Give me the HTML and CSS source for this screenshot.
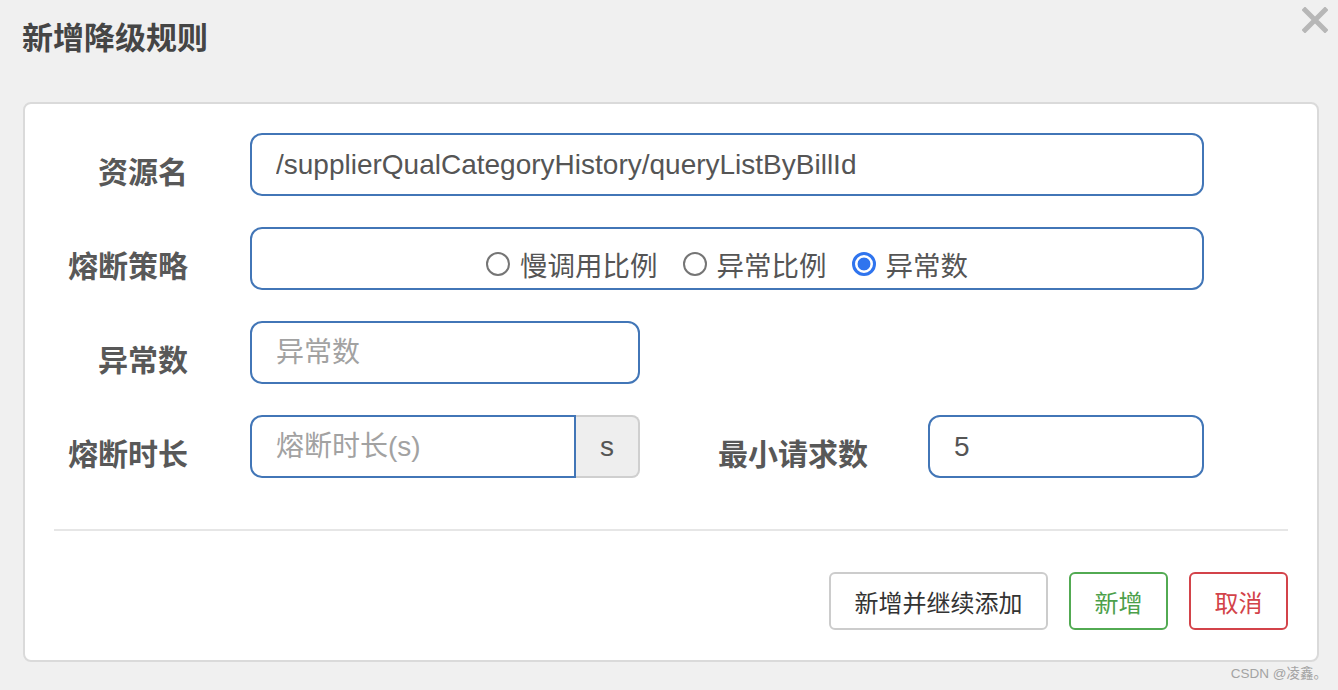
FILE: index.html
```html
<!DOCTYPE html>
<html lang="zh-CN">
<head>
<meta charset="utf-8">
<title>新增降级规则</title>
<link rel="stylesheet" href="styles.css">
</head>
<body>
<div class="page">
  <header class="header">
    <h1 class="title">新增降级规则</h1>
    <span class="close" aria-label="close">
      <svg width="26" height="26" viewBox="0 0 26 26"><path d="M3 3 L23 23 M23 3 L3 23" stroke="#b7b7b7" stroke-width="5" stroke-linecap="square"/></svg>
    </span>
  </header>

  <section class="card">
    <form class="form">
      <label class="label">资源名</label>
      <input class="field span-wide" type="text" value="/supplierQualCategoryHistory/queryListByBillId">

      <label class="label">熔断策略</label>
      <div class="field radio-box span-wide">
        <label class="radio-item"><input type="radio" name="strategy" class="radio"><span>慢调用比例</span></label>
        <label class="radio-item"><input type="radio" name="strategy" class="radio"><span>异常比例</span></label>
        <label class="radio-item"><input type="radio" name="strategy" class="radio" checked><span>异常数</span></label>
      </div>

      <label class="label">异常数</label>
      <input class="field" type="text" placeholder="异常数">
      <div class="empty"></div>
      <div class="empty"></div>

      <label class="label">熔断时长</label>
      <div class="input-group">
        <input class="field group-field" type="text" placeholder="熔断时长(s)">
        <span class="addon">s</span>
      </div>
      <label class="label label-right">最小请求数</label>
      <input class="field" type="text" value="5">
    </form>

    <div class="divider"></div>

    <div class="actions">
      <button class="btn btn-default" type="button">新增并继续添加</button>
      <button class="btn btn-green" type="button">新增</button>
      <button class="btn btn-red" type="button">取消</button>
    </div>
  </section>

  <div class="watermark">CSDN @凌鑫。</div>
</div>
</body>
</html>
```
FILE: styles.css
```css
* { box-sizing: border-box; }

html, body {
  margin: 0;
  padding: 0;
  background: #f0f0f0;
  font-family: "Liberation Sans", Arial, "Noto Sans CJK SC", sans-serif;
}

.page {
  width: 1338px;
  height: 690px;
  overflow: hidden;
}

.header {
  display: flex;
  justify-content: space-between;
  align-items: flex-start;
  height: 102px;
}

.title {
  margin: 19px 0 0 22px;
  font-size: 31px;
  line-height: 34px;
  font-weight: bold;
  color: #454545;
  font-family: "Noto Sans CJK SC", sans-serif;
}

.close {
  display: block;
  margin: 7px 10px 0 0;
  width: 26px;
  height: 26px;
}
.close svg { display: block; }

.card {
  margin-left: 23px;
  width: 1296px;
  height: 560px;
  background: #fff;
  border: 2px solid #dadada;
  border-radius: 8px;
}

.form {
  display: grid;
  grid-template-columns: 225px 390px 288px 276px;
  grid-auto-rows: 63px;
  row-gap: 31px;
  padding-top: 29px;
}

.label {
  display: flex;
  align-items: center;
  justify-content: flex-end;
  padding: 10px 62px 0 0;
  font-family: "Noto Sans CJK SC", sans-serif;
  font-weight: bold;
  font-size: 30px;
  color: #585858;
}
.label-right { padding-right: 60px; }

.field {
  height: 63px;
  width: 100%;
  margin: 0;
  padding: 0 24px;
  border: 2px solid #4276b7;
  border-radius: 12px;
  background: #fff;
  font-family: "Liberation Sans", Arial, "Noto Sans CJK SC", sans-serif;
  font-size: 28px;
  color: #555;
  outline: none;
}
.field::placeholder { color: #a2a2a2; }

.span-wide { grid-column: 2 / 5; }

.radio-box {
  display: flex;
  align-items: center;
  justify-content: center;
  gap: 25px;
  padding-top: 10px;
}

.radio-item {
  display: flex;
  align-items: center;
  gap: 10px;
  font-family: "Noto Sans CJK SC", sans-serif;
  font-size: 27.5px;
  color: #555;
}

.radio {
  appearance: none;
  -webkit-appearance: none;
  margin: 0;
  width: 24px;
  height: 24px;
  border: 2px solid #757575;
  border-radius: 50%;
  background: #fff;
}
.radio:checked {
  border: 3px solid #2f74ee;
  background: radial-gradient(circle, #2f74ee 0 6px, #fff 6.8px);
}

.input-group {
  display: flex;
  height: 63px;
}
.group-field {
  flex: 1;
  border-radius: 12px 0 0 12px;
}
.addon {
  width: 64px;
  display: flex;
  align-items: center;
  justify-content: center;
  background: #eee;
  border: 2px solid #cfcfcf;
  border-left: none;
  border-radius: 0 8px 8px 0;
  font-size: 28px;
  color: #555;
}

.divider {
  margin: 51px 29px 0;
  height: 2px;
  background: #e6e6e6;
}

.actions {
  display: flex;
  justify-content: flex-end;
  gap: 21px;
  padding: 41px 29px 0;
}

.btn {
  height: 58px;
  padding: 0 23.5px;
  background: #fff;
  border: 2px solid #ccc;
  border-radius: 6px;
  font-family: "Noto Sans CJK SC", sans-serif;
  font-size: 24px;
  color: #333;
  cursor: pointer;
}
.btn-green { border-color: #52aa52; color: #4ca04a; }
.btn-red { border-color: #d3434a; color: #d3434a; }

.watermark {
  text-align: right;
  padding-right: 11px;
  margin-top: 4px;
  font-family: "Liberation Sans", Arial, "Noto Sans CJK SC", sans-serif;
  font-size: 13.5px;
  line-height: 16px;
  color: #a3a3a3;
}
```
